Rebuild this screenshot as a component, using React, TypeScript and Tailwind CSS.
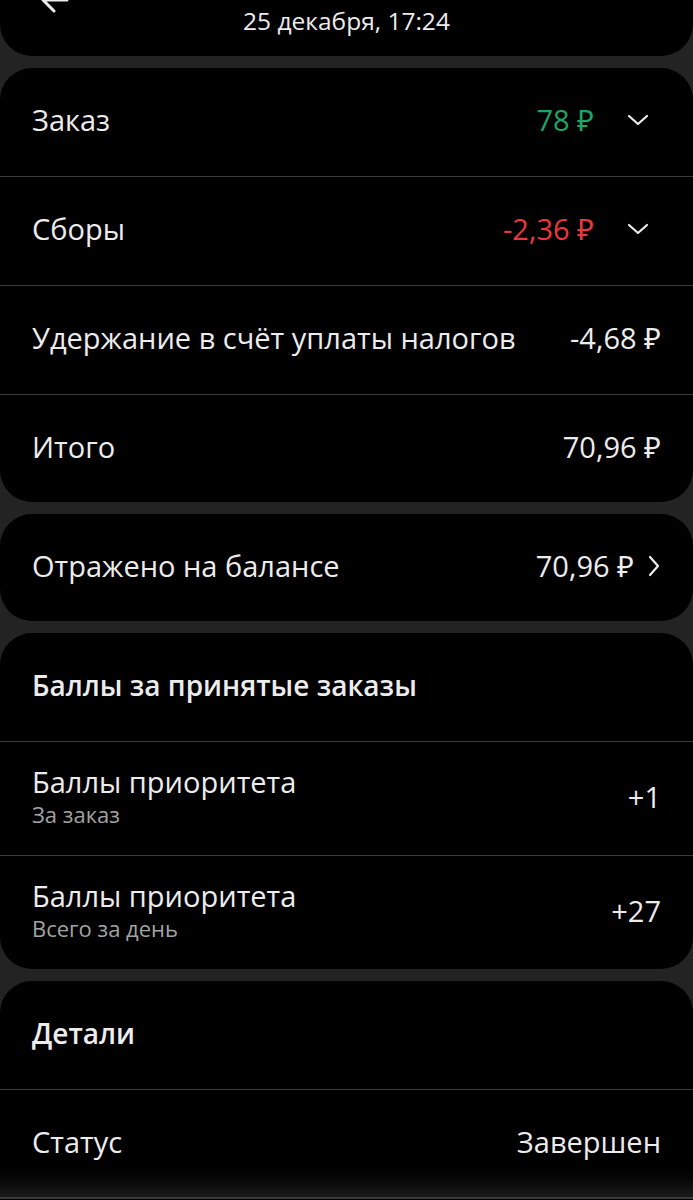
const font = { fontFamily: '"Open Sans", "Noto Sans", sans-serif' }

function Divider() {
  return <div className="h-px bg-[#3b3b3b]" />
}

function Down() {
  return (
    <svg className="ml-[33px]" width="22" height="12" viewBox="0 0 22 12" fill="none">
      <path d="M2 2l9 8 9-8" stroke="#ececec" strokeWidth="2.2" strokeLinecap="round" strokeLinejoin="round" />
    </svg>
  )
}

function Right() {
  return (
    <svg className="ml-[14px]" width="12" height="22" viewBox="0 0 12 22" fill="none">
      <path d="M2 2l8 9-8 9" stroke="#ececec" strokeWidth="2.2" strokeLinecap="round" strokeLinejoin="round" />
    </svg>
  )
}

function Row({
  label,
  value,
  valueClass = 'text-[#ececec]',
  icon,
  h = 'h-[108px]',
}: {
  label: string
  value?: string
  valueClass?: string
  icon?: 'down' | 'right'
  h?: string
}) {
  const pad = icon === 'down' ? 'pl-8 pr-[44px]' : icon === 'right' ? 'pl-8 pr-[33px]' : 'px-8'
  return (
    <div className={`flex items-center justify-between pb-1 ${h} ${pad}`}>
      <span className="text-[29px] text-[#ececec]">{label}</span>
      <div className="flex items-center">
        <span className={`text-[29px] ${valueClass}`}>{value}</span>
        {icon === 'down' && <Down />}
        {icon === 'right' && <Right />}
      </div>
    </div>
  )
}

function PointsRow({ sub, value }: { sub: string; value: string }) {
  return (
    <div className="flex h-[113px] items-center justify-between px-8">
      <div className="-mt-[5px] flex flex-col">
        <span className="text-[29px] leading-[36px] text-[#ececec]">Баллы приоритета</span>
        <span className="text-[22px] leading-[29px] text-[#a3a3a3]">{sub}</span>
      </div>
      <span className="-mt-1 text-[29px] text-[#ececec]">{value}</span>
    </div>
  )
}

export default function App() {
  return (
    <div className="flex h-[1200px] flex-col gap-3 overflow-hidden bg-[#232323]" style={font}>
      <div className="relative flex h-[56px] shrink-0 items-start justify-center rounded-b-[32px] bg-black">
        <svg
          className="absolute left-[40px] top-[-14px]"
          width="30"
          height="30"
          viewBox="0 0 30 30"
          fill="none"
          stroke="#ececec"
          strokeWidth="3"
          strokeLinecap="round"
          strokeLinejoin="round"
        >
          <path d="M27 14H3M3 14l11-11M3 14l11 11" />
        </svg>
        <span className="mt-[5px] text-[24.5px] leading-[32px] text-[#ececec]">25 декабря, 17:24</span>
      </div>

      <div className="shrink-0 rounded-[32px] bg-black">
        <Row label="Заказ" value="78 ₽" valueClass="text-[#1fa463]" icon="down" />
        <Divider />
        <Row label="Сборы" value="-2,36 ₽" valueClass="text-[#e8383d]" icon="down" />
        <Divider />
        <Row label="Удержание в счёт уплаты налогов" value="-4,68 ₽" />
        <Divider />
        <Row label="Итого" value="70,96 ₽" h="h-[107px]" />
      </div>

      <div className="shrink-0 rounded-[32px] bg-black">
        <Row label="Отражено на балансе" value="70,96 ₽" icon="right" h="h-[107px]" />
      </div>

      <div className="shrink-0 rounded-[32px] bg-black">
        <div className="flex h-[108px] items-center px-8 pb-1">
          <span className="text-[28px] font-semibold text-[#ececec]">Баллы за принятые заказы</span>
        </div>
        <Divider />
        <PointsRow sub="За заказ" value="+1" />
        <Divider />
        <PointsRow sub="Всего за день" value="+27" />
      </div>

      <div className="shrink-0 rounded-t-[32px] bg-black">
        <div className="flex h-[108px] items-center px-8 pb-1">
          <span className="text-[28px] font-semibold text-[#ececec]">Детали</span>
        </div>
        <Divider />
        <div className="flex h-[107px] items-center justify-between bg-gradient-to-b from-black from-60% to-[#1b1b1b] px-8 pb-1">
          <span className="text-[29px] text-[#ececec]">Статус</span>
          <span className="text-[29px] text-[#ececec]">Завершен</span>
        </div>
        <div className="h-[2px] bg-[#3b3b3b]" />
        <div className="h-10 bg-black" />
      </div>
    </div>
  )
}
